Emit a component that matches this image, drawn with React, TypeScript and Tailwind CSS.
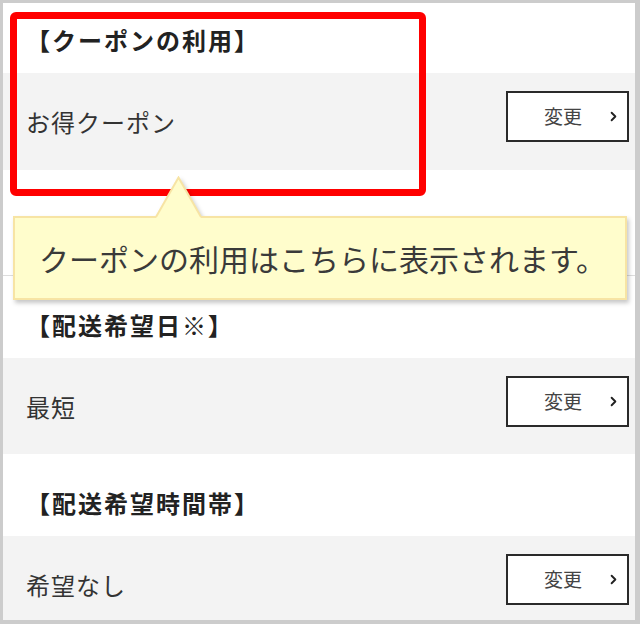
import { ChevronRight } from "lucide-react"

const font = { fontFamily: '"Noto Sans CJK JP", "Noto Sans", sans-serif' }

function SectionHeader({ title, h }: { title: string; h: string }) {
  return (
    <div className={`${h} flex items-end pb-[17px] pl-[23px]`}>
      <h2 className="text-[24px] leading-8 font-bold tracking-[2px] text-[#222]">{title}</h2>
    </div>
  )
}

function ChangeRow({ label, h }: { label: string; h: string }) {
  return (
    <div className={`${h} bg-[#f3f3f3] flex items-start justify-between pl-[23px] pr-[6px]`}>
      <p className="mt-[33px] text-[24px] leading-8 tracking-[1px] text-[#333]">{label}</p>
      <button className="mt-[18px] w-[123px] h-[51px] bg-white border-2 border-[#2a2a2a] flex items-center">
        <span className="ml-[36px] text-[19px] text-[#444]">変更</span>
        <ChevronRight size={15} strokeWidth={3} className="ml-auto mr-[6px] text-[#222]" />
      </button>
    </div>
  )
}

export default function App() {
  return (
    <div className="w-[640px] h-[624px] bg-[#cccccc] pt-[3px] pl-[3px] pr-[5px] pb-[4px]" style={font}>
      <div className="relative h-full bg-white overflow-hidden flex flex-col">
        {/* coupon */}
        <SectionHeader title="【クーポンの利用】" h="h-[70px]" />
        <ChangeRow label="お得クーポン" h="h-[97px]" />
        <div className="h-[106px] border-b border-[#dddddd]" />

        {/* delivery date */}
        <SectionHeader title="【配送希望日※】" h="h-[82px]" />
        <ChangeRow label="最短" h="h-[96px]" />

        {/* delivery time */}
        <SectionHeader title="【配送希望時間帯】" h="h-[82px]" />
        <ChangeRow label="希望なし" h="flex-1" />

        {/* highlight */}
        <div className="absolute left-[7px] top-[9px] w-[416px] h-[184px] border-[7px] border-[#ff0000] rounded-[6px]" />

        {/* tooltip */}
        <div className="absolute left-[10px] top-[213px] w-[614px] h-[84px] drop-shadow-[2px_3px_2px_rgba(0,0,0,0.22)]">
          <div className="h-full bg-[#fffdcc] border-2 border-[#f7e4a4] flex items-center pl-[24px]">
            <p className="text-[30px] leading-10 text-[#3a3a3a]">クーポンの利用はこちらに表示されます。</p>
          </div>
          <svg className="absolute left-[142px] top-[-40px]" width="47" height="42" viewBox="0 0 47 42">
            <polygon points="1,42 23.5,1 46,42" fill="#fffdcc" />
            <path d="M1 41 L23.5 1.5 L46 41" fill="none" stroke="#f7e4a4" strokeWidth="2" />
          </svg>
        </div>
      </div>
    </div>
  )
}
